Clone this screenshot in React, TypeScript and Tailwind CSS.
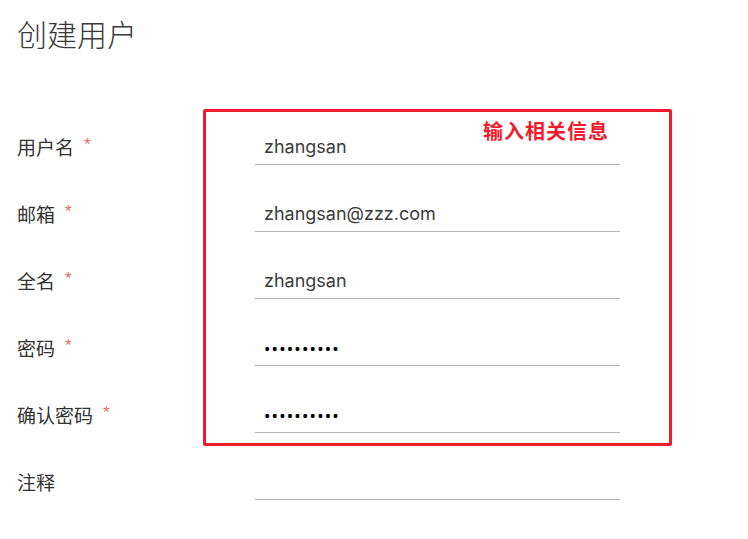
import React from 'react';

interface Field {
  label: string;
  value: string;
  required: boolean;
  type?: string;
}

const fields: Field[] = [
  { label: '用户名', value: 'zhangsan', required: true },
  { label: '邮箱', value: 'zhangsan@zzz.com', required: true },
  { label: '全名', value: 'zhangsan', required: true },
  { label: '密码', value: 'zhangsan12', required: true, type: 'password' },
  { label: '确认密码', value: 'zhangsan12', required: true, type: 'password' },
  { label: '注释', value: '', required: false },
];

const cjk = "font-['Noto_Sans_CJK_SC',sans-serif]";

const FormRow: React.FC<{ field: Field }> = ({ field }) => {
  const isPassword = field.type === 'password';
  return (
    <div className="grid grid-cols-[238px_365px] items-center">
      <div className={`flex items-center text-[19px] text-[#333] ${cjk}`}>
        <span>{field.label}</span>
        {field.required && (
          <span className="ml-[10px] -translate-y-[3px] text-[17px] leading-none text-[#e8685f] font-['Liberation_Sans',sans-serif]">
            *
          </span>
        )}
      </div>
      <input
        type={isPassword ? 'password' : 'text'}
        defaultValue={field.value}
        readOnly
        className={`h-[36px] w-full border-b border-[#b5b5b5] bg-transparent pl-[9px] outline-none ${
          isPassword
            ? 'pt-[2px] text-[17px] tracking-[1.2px] text-black'
            : "text-[18px] text-[#3c3c3c] font-['Inter',sans-serif]"
        }`}
      />
    </div>
  );
};

export default function App() {
  return (
    <div className="relative min-h-[539px] w-[748px] bg-white pl-[17px] pt-[12px]">
      <h1 className={`text-[30px] leading-[42px] font-light text-[#3a3a3a] ${cjk}`}>创建用户</h1>

      <div className="mt-[75px] flex flex-col gap-[31px]">
        {fields.map((f) => (
          <FormRow key={f.label} field={f} />
        ))}
      </div>

      {/* annotation overlay */}
      <div className="pointer-events-none absolute left-[203px] top-[109px] h-[337px] w-[469px] rounded-[2px] border-[3px] border-[#f21b2d]" />
      <div className={`pointer-events-none absolute left-[483px] top-[120px] text-[20px] leading-[22px] font-bold tracking-[1px] text-[#f21b2d] ${cjk}`}>
        输入相关信息
      </div>
    </div>
  );
}
